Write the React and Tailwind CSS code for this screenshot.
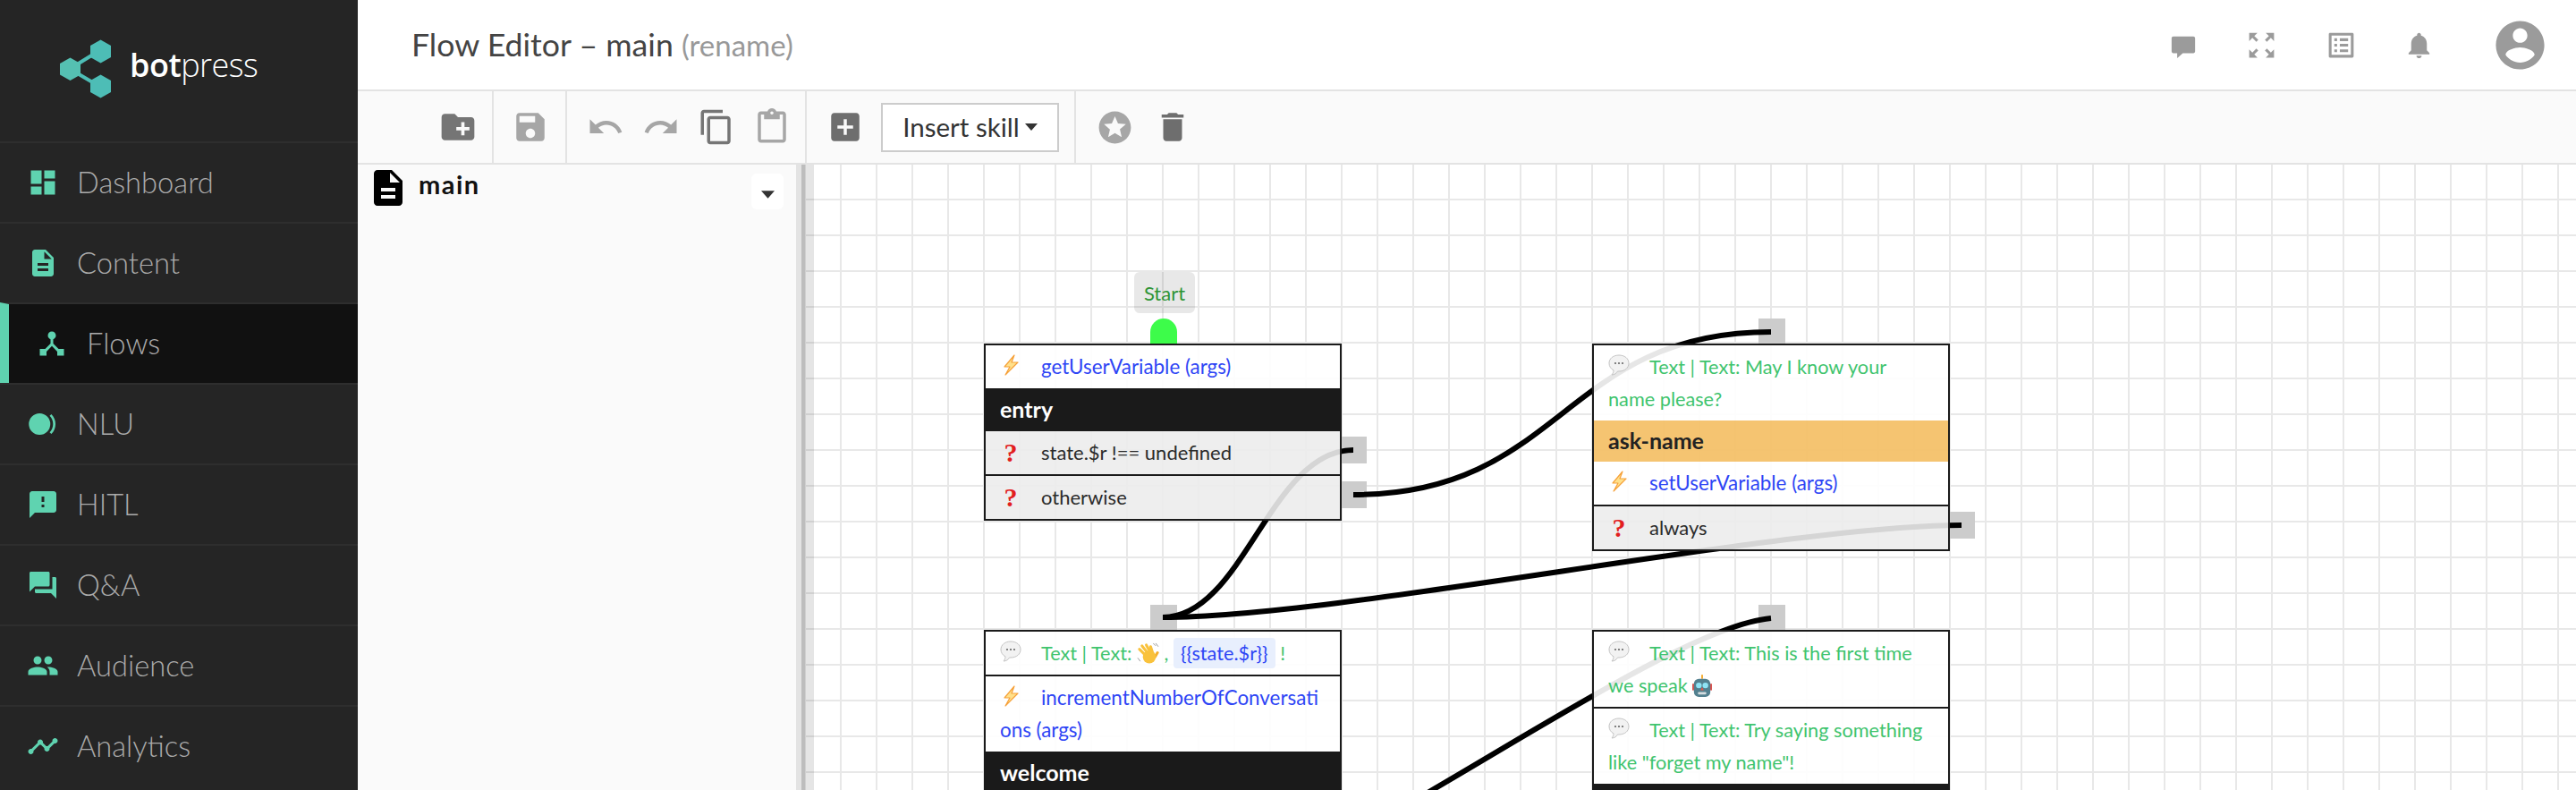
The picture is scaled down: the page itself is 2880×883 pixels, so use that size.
import React from 'react';

const ICONS = {
  dashboard: 'M3 13h8V3H3v10zm0 8h8v-6H3v6zm10 0h8V11h-8v10zm0-18v6h8V3h-8z',
  description: 'M14 2H6c-1.1 0-1.99.9-1.99 2L4 20c0 1.1.89 2 1.99 2H18c1.1 0 2-.9 2-2V8l-6-6zm2 16H8v-2h8v2zm0-4H8v-2h8v2zm-3-5V3.5L18.5 9H13z',
  hub: 'M17 16l-4-4V8.82C14.16 8.4 15 7.3 15 6c0-1.66-1.34-3-3-3S9 4.34 9 6c0 1.3.84 2.4 2 2.82V12l-4 4H3v5h5v-3.05l4-4.2 4 4.2V21h5v-5h-4z',
  failed: 'M20 2H4c-1.1 0-1.99.9-1.99 2L2 22l4-4h14c1.1 0 2-.9 2-2V4c0-1.1-.9-2-2-2zm-7 12h-2v-2h2v2zm0-4h-2V6h2v4z',
  forum: 'M21 6h-2v9H6v2c0 .55.45 1 1 1h11l4 4V7c0-.55-.45-1-1-1zm-4 6V3c0-.55-.45-1-1-1H3c-.55 0-1 .45-1 1v14l4-4h10c.55 0 1-.45 1-1z',
  people: 'M16 11c1.66 0 2.99-1.34 2.99-3S17.66 5 16 5c-1.66 0-3 1.34-3 3s1.34 3 3 3zm-8 0c1.66 0 2.99-1.34 2.99-3S9.66 5 8 5C6.34 5 5 6.34 5 8s1.34 3 3 3zm0 2c-2.33 0-7 1.17-7 3.5V19h14v-2.5c0-2.33-4.67-3.5-7-3.5zm8 0c-.29 0-.62.02-.97.05 1.16.84 1.97 1.97 1.97 3.45V19h6v-2.5c0-2.33-4.67-3.5-7-3.5z',
  timeline: 'M23 8c0 1.1-.9 2-2 2-.18 0-.35-.02-.51-.07l-3.56 3.55c.05.16.07.34.07.52 0 1.1-.9 2-2 2s-2-.9-2-2c0-.18.02-.36.07-.52l-2.55-2.55c-.16.05-.34.07-.52.07s-.36-.02-.52-.07l-4.55 4.56c.05.16.07.33.07.51 0 1.1-.9 2-2 2s-2-.9-2-2 .9-2 2-2c.18 0 .35.02.51.07l4.56-4.55C8.02 9.36 8 9.18 8 9c0-1.1.9-2 2-2s2 .9 2 2c0 .18-.02.36-.07.52l2.55 2.55c.16-.05.34-.07.52-.07s.36.02.52.07l3.55-3.56C19.02 8.35 19 8.18 19 8c0-1.1.9-2 2-2s2 .9 2 2z',
  nlu: 'M9.5 4a8 8 0 1 0 0 16 8 8 0 0 0 0-16zM18.3 4.6l-1.3 1.2c3.4 3.4 3.4 9 0 12.4l1.3 1.2c4.1-4.1 4.1-10.7 0-14.8z',
  newFolder: 'M20 6h-8l-2-2H4c-1.11 0-1.99.89-1.99 2L2 18c0 1.11.89 2 2 2h16c1.11 0 2-.89 2-2V8c0-1.11-.89-2-2-2zm-1 8h-3v3h-2v-3h-3v-2h3V9h2v3h3v2z',
  save: 'M17 3H5c-1.11 0-2 .9-2 2v14c0 1.1.89 2 2 2h14c1.1 0 2-.9 2-2V7l-4-4zm-5 16c-1.66 0-3-1.34-3-3s1.34-3 3-3 3 1.34 3 3-1.34 3-3 3zm3-10H5V5h10v4z',
  undo: 'M12.5 8c-2.65 0-5.05.99-6.9 2.6L2 7v9h9l-3.62-3.62c1.39-1.16 3.16-1.88 5.12-1.88 3.54 0 6.55 2.31 7.6 5.5l2.37-.78C21.08 11.03 17.15 8 12.5 8z',
  redo: 'M18.4 10.6C16.55 8.99 14.15 8 11.5 8c-4.65 0-8.58 3.03-9.96 7.22L3.9 16c1.05-3.19 4.05-5.5 7.6-5.5 1.95 0 3.73.72 5.12 1.88L13 16h9V7l-3.6 3.6z',
  copy: 'M16 1H4c-1.1 0-2 .9-2 2v14h2V3h12V1zm3 4H8c-1.1 0-2 .9-2 2v14c0 1.1.9 2 2 2h11c1.1 0 2-.9 2-2V7c0-1.1-.9-2-2-2zm0 16H8V7h11v14z',
  paste: 'M19 2h-4.18C14.4.84 13.3 0 12 0c-1.3 0-2.4.84-2.82 2H5c-1.1 0-2 .9-2 2v16c0 1.1.9 2 2 2h14c1.1 0 2-.9 2-2V4c0-1.1-.9-2-2-2zm-7 0c.55 0 1 .45 1 1s-.45 1-1 1-1-.45-1-1 .45-1 1-1zm7 18H5V4h2v3h10V4h2v16z',
  addBox: 'M19 3H5c-1.11 0-2 .9-2 2v14c0 1.1.89 2 2 2h14c1.1 0 2-.9 2-2V5c0-1.1-.9-2-2-2zm-2 10h-4v4h-2v-4H7v-2h4V7h2v4h4v2z',
  stars: 'M11.99 2C6.47 2 2 6.48 2 12s4.47 10 9.99 10C17.52 22 22 17.52 22 12S17.52 2 11.99 2zm4.24 16L12 15.45 7.77 18l1.12-4.81-3.73-3.23 4.92-.42L12 5l1.92 4.53 4.92.42-3.73 3.23L16.23 18z',
  trash: 'M6 19c0 1.1.9 2 2 2h8c1.1 0 2-.9 2-2V7H6v12zM19 4h-3.5l-1-1h-5l-1 1H5v2h14V4z',
  chat: 'M21 4.5H3c-.8 0-1.5.7-1.5 1.5v12c0 .8.7 1.5 1.5 1.5h3.5V24l5-4.5H21c.8 0 1.5-.7 1.5-1.5V6c0-.8-.7-1.5-1.5-1.5z',
  expand: 'M15 3l2.3 2.3-2.89 2.87 1.42 1.42L18.7 6.7 21 9V3zM3 9l2.3-2.3 2.87 2.89 1.42-1.42L6.7 5.3 9 3H3zm6 12l-2.3-2.3 2.89-2.87-1.42-1.42L5.3 17.3 3 15v6zm12-6l-2.3 2.3-2.87-2.89-1.42 1.42 2.89 2.87L15 21h6z',
  list: 'M19 5v14H5V5h14m1.1-2H3.9c-.5 0-.9.4-.9.9v16.2c0 .4.4.9.9.9h16.2c.4 0 .9-.5.9-.9V3.9c0-.5-.5-.9-.9-.9zM11 7h6v2h-6V7zm0 4h6v2h-6v-2zm0 4h6v2h-6zM7 7h2v2H7zm0 4h2v2H7zm0 4h2v2H7z',
  bell: 'M12 22c1.1 0 2-.9 2-2h-4c0 1.1.89 2 2 2zm6-6v-5c0-3.07-1.64-5.64-4.5-6.32V4c0-.83-.67-1.5-1.5-1.5s-1.5.67-1.5 1.5v.68C7.63 5.36 6 7.92 6 11v5l-2 2v1h16v-1l-2-2z',
  account: 'M12 2C6.48 2 2 6.48 2 12s4.48 10 10 10 10-4.48 10-10S17.52 2 12 2zm0 3c1.66 0 3 1.34 3 3s-1.34 3-3 3-3-1.34-3-3 1.34-3 3-3zm0 14.2c-2.5 0-4.71-1.28-6-3.22.03-1.99 4-3.08 6-3.08 1.99 0 5.97 1.09 6 3.08-1.29 1.94-3.5 3.22-6 3.22z',
};

function Icon({ name, className = '' }) {
  return (
    <svg viewBox="0 0 24 24" className={'fill-current shrink-0 ' + className}>
      <path d={ICONS[name]} />
    </svg>
  );
}

const NAV = [
  { label: 'Dashboard', icon: 'dashboard' },
  { label: 'Content', icon: 'description' },
  { label: 'Flows', icon: 'hub', active: true },
  { label: 'NLU', icon: 'nlu' },
  { label: 'HITL', icon: 'failed' },
  { label: 'Q&A', icon: 'forum' },
  { label: 'Audience', icon: 'people' },
  { label: 'Analytics', icon: 'timeline' },
];

function Logo() {
  return (
    <div className="h-[158px] flex items-start pt-[44px] pl-[66px]">
      <svg viewBox="0 0 60 66" className="w-[60px] h-[66px] mr-[19px]">
        <path d="M12 33 L46 12 M12 33 L46 53" stroke="#4dbdb6" strokeWidth="4" fill="none" />
        <path d="M12.5 20.5 L24 27 V39.5 L12.5 46 L1 39.5 V27 Z" fill="#55c0b2" />
        <path d="M46.5 0.5 L58 7 V20 L46.5 26.5 L35 20 V7 Z" fill="#4dbdb6" />
        <path d="M46.5 39.500 L58 46 V59 L46.5 65.500 L35 59 V46 Z" fill="#4dbdb6" />
      </svg>
      <div className="text-[36px] leading-[46px] text-white font-['Open_Sans',sans-serif] mt-[6px] tracking-[-0.5px]">
        <span className="font-semibold">bot</span><span className="font-light">press</span>
      </div>
    </div>
  );
}

function Sidebar() {
  return (
    <aside className="w-[400px] shrink-0 h-full bg-[#252525] overflow-hidden">
      <Logo />
      {NAV.map((item) => (
        <div
          key={item.label}
          className={
            item.active
              ? 'h-[90px] border-t-2 border-[#2e2e2e] bg-[#111111] border-l-[10px] border-l-[#5fd3b0] pl-[30px] flex items-center gap-[21px] text-[#ababab]'
              : 'h-[90px] border-t-2 border-[#2e2e2e] pl-[30px] flex items-center gap-[20px] text-[#ababab]'
          }
        >
          <Icon name={item.icon} className="w-[36px] h-[36px] text-[#5fd3b0]" />
          <span className="text-[32.7px] font-light">{item.label}</span>
        </div>
      ))}
    </aside>
  );
}

function Header() {
  return (
    <header className="h-[102px] shrink-0 bg-white border-b-2 border-[#e3e3e3] flex items-center pl-[60px] pr-[30px]">
      <h1 className="text-[35.7px] text-[#444444] font-normal">
        Flow Editor – main <span className="text-[#999999] text-[33px]">(rename)</span>
      </h1>
      <div className="ml-auto flex items-center text-[#9b9b9b]">
        <Icon name="chat" className="w-[30px] h-[30px] mr-[54px]" />
        <Icon name="expand" className="w-[37px] h-[37px] mr-[52px]" />
        <Icon name="list" className="w-[37px] h-[37px] mr-[51px]" />
        <Icon name="bell" className="w-[35px] h-[35px] mr-[63px]" />
        <Icon name="account" className="w-[65px] h-[65px]" />
      </div>
    </header>
  );
}

function Toolbar() {
  return (
    <div className="h-[82px] shrink-0 bg-[#fafafa] border-b-2 border-[#e3e3e3] flex items-center">
      <div className="w-[152px] h-full border-r-2 border-[#e3e3e3] flex items-center justify-end pr-[16px]">
        <Icon name="newFolder" className="w-[44px] h-[44px] text-[#757575]" />
      </div>
      <div className="w-[82px] h-full border-r-2 border-[#e3e3e3] flex items-center justify-center pl-[2px]">
        <Icon name="save" className="w-[42px] h-[42px] text-[#a6a6a6]" />
      </div>
      <div className="w-[268px] h-full border-r-2 border-[#e3e3e3] flex items-center pl-[22px] gap-[20px]">
        <Icon name="undo" className="w-[42px] h-[42px] text-[#a6a6a6]" />
        <Icon name="redo" className="w-[42px] h-[42px] text-[#a6a6a6]" />
        <Icon name="copy" className="w-[42px] h-[42px] text-[#757575]" />
        <Icon name="paste" className="w-[42px] h-[42px] text-[#a6a6a6]" />
      </div>
      <div className="w-[301px] h-full border-r-2 border-[#e3e3e3] flex items-center pl-[22px]">
        <Icon name="addBox" className="w-[42px] h-[42px] text-[#6e6e6e]" />
        <button className="ml-[19px] w-[199px] h-[55px] bg-white border-2 border-[#cccccc] flex items-center justify-center gap-[6px] text-[29.5px] text-[#333333]">
          Insert skill
          <svg viewBox="0 0 14 8" className="w-[14px] h-[8px] fill-[#333333]"><path d="M0 0h14L7 8z" /></svg>
        </button>
      </div>
      <div className="flex items-center pl-[22px] gap-[22px]">
        <Icon name="stars" className="w-[43px] h-[43px] text-[#a6a6a6]" />
        <Icon name="trash" className="w-[42px] h-[42px] text-[#6e6e6e]" />
      </div>
    </div>
  );
}

function FlowPanel() {
  return (
    <div className="w-[490px] shrink-0 h-full bg-[#fafafa] flex items-start">
      <Icon name="description" className="w-[48px] h-[48px] ml-[10px] mt-[2px] text-black" />
      <span className="ml-[10px] mt-[4px] text-[29px] font-bold tracking-[1.5px] text-[#111111] leading-[36px]">main</span>
      <div className="ml-auto mr-[14px] mt-[10px] w-[36px] h-[40px] bg-white rounded-md flex items-center justify-center pt-[6px]">
        <svg viewBox="0 0 14 8" className="w-[15px] h-[9px] fill-[#333333]"><path d="M0 0h14L7 8z" /></svg>
      </div>
    </div>
  );
}

function Splitter() {
  return (
    <div className="w-[10px] shrink-0 h-full bg-[#e3e3e3] flex justify-end">
      <div className="w-[4px] h-full bg-[#bdbdbd]" />
    </div>
  );
}

function Bolt() {
  return (
    <svg viewBox="0 0 24 24" className="w-[24px] h-[24px]">
      <path d="M16 1 L5 14 H11 L6 23 L20 9 H13 Z" fill="#ffe08a" stroke="#f6a13a" strokeWidth="1.200" strokeLinejoin="round" />
    </svg>
  );
}

function Bubble() {
  return (
    <svg viewBox="0 0 24 24" className="w-[24px] h-[24px]">
      <path d="M12 1 C5.500 1 1 4.800 1 10 C1 13.500 3 16.300 6 17.800 C6 20 5 22 4 23 C7 23 9.500 21 10.500 19 C11 19 11.500 19 12 19 C18.500 19 23 15.200 23 10 C23 4.800 18.500 1 12 1 Z" fill="#f2f2f2" stroke="#c4c4c4" strokeWidth="1" />
      <circle cx="8" cy="10" r="1.100" fill="#666666" />
      <circle cx="12" cy="10" r="1.100" fill="#666666" />
      <circle cx="16" cy="10" r="1.100" fill="#666666" />
    </svg>
  );
}

function Wave() {
  return (
    <svg viewBox="0 0 26 26" className="inline-block w-[25px] h-[25px] align-[-5px]">
      <path d="M10 15 L3 8 M13 13 L6 4 M16 12 L11 3 M19 14 L16 5" stroke="#f9c23c" strokeWidth="3.200" strokeLinecap="round" fill="none" />
      <path d="M21 17 L24 12" stroke="#f5b02e" strokeWidth="3.200" strokeLinecap="round" fill="none" />
      <circle cx="14.500" cy="17" r="7.500" fill="#f9c23c" />
      <path d="M19 1 L22 4 M22 1 L25 5 M1 18 L4 22" stroke="#9a9a9a" strokeWidth="1" fill="none" />
    </svg>
  );
}

function Robot() {
  return (
    <svg viewBox="0 0 24 28" className="inline-block w-[22px] h-[26px] align-[-6px]">
      <rect x="11" y="0" width="2" height="5" fill="#f5a623" />
      <rect x="0" y="11" width="3" height="8" fill="#d9534f" />
      <rect x="21" y="11" width="3" height="8" fill="#d9534f" />
      <rect x="2" y="5" width="20" height="22" rx="6" fill="#53808f" />
      <circle cx="8" cy="13" r="3.500" fill="#8fe3f5" />
      <circle cx="16" cy="13" r="3.500" fill="#8fe3f5" />
      <path d="M12 15 L14 19 H10 Z" fill="#e8564a" />
      <rect x="7" y="21" width="10" height="3" rx="1" fill="#d5dde0" />
    </svg>
  );
}

function Row({ kind, breakAll, children }) {
  const tone = {
    action: 'bg-white/90 text-[#2e45f5] text-[22.4px]',
    say: 'bg-white/90 text-[#3fc46e] text-[21.7px]',
    cond: 'bg-[#ececec]/90 text-[#2b2b2b] text-[22px]',
  }[kind];
  return (
    <div className={'px-[16px] py-[6px] leading-[36px] ' + tone + (breakAll ? ' break-all' : '')}>
      <span className="inline-block w-[46px] h-[24px] align-[-2px]">
        {kind === 'action' && <Bolt />}
        {kind === 'say' && <Bubble />}
        {kind === 'cond' && (
          <span className="block w-[24px] text-center text-[30px] leading-[22px] font-bold text-[#e21f1f] font-['Liberation_Serif',serif]">?</span>
        )}
      </span>
      {children}
    </div>
  );
}

function Title({ light, short, children }) {
  return (
    <div
      className={
        (light ? 'bg-[#f4c169]/95 text-[#222222] ' : 'bg-[#1a1a1a] text-white ') +
        (short ? 'h-[46px] ' : 'h-[48px] ') +
        'px-[16px] flex items-center text-[25px] font-bold'
      }
    >
      {children}
    </div>
  );
}

function Node({ className, children }) {
  return <div className={'absolute w-[400px] border-2 border-[#1a1a1a] ' + className}>{children}</div>;
}

function Line() {
  return <div className="h-[2px] bg-[#1a1a1a]" />;
}

// squares behind the wires, canvas coords
const PORTS = [
  'left-[600px] top-[304px] w-[28px] h-[30px]',
  'left-[600px] top-[354px] w-[28px] h-[30px]',
  'left-[1066px] top-[172px] w-[30px] h-[28px]',
  'left-[1280px] top-[388px] w-[28px] h-[30px]',
  'left-[386px] top-[492px] w-[30px] h-[28px]',
  'left-[1066px] top-[492px] w-[30px] h-[28px]',
];

const LINKS = [
  'M1513 503 C1420 503 1390 690 1300 690',
  'M1513 553 C1747 553 1747 371 1980 371',
  'M2193 587 C1993 587 1500 690 1300 690',
  'M1480 950 C1640 870 1880 700 1980 691',
];

function Canvas() {
  return (
    <div className="relative flex-1 h-full overflow-hidden bg-white bg-[linear-gradient(to_right,#e8e8e8_2px,transparent_2px),linear-gradient(to_bottom,#e8e8e8_2px,transparent_2px)] bg-[size:40px_40px] bg-[position:39px_38px]">
      <div className="absolute left-0 top-0 bottom-0 w-[10px] bg-black/10" />
      <div className="absolute left-[368px] top-[120px] w-[68px] h-[46px] rounded-md bg-black/[.09] flex items-center justify-center text-[22px] text-[#2f9436]">
        Start
      </div>
      <div className="absolute left-[386px] top-[172px] w-[30px] h-[28px] rounded-t-[15px] bg-[#3dfc4a]" />
      {PORTS.map((p) => (
        <div key={p} className={'absolute bg-[#cccccc] ' + p} />
      ))}
      <svg viewBox="900 184 1980 699" className="absolute left-0 top-0 w-[1980px] h-[699px]">
        {LINKS.map((d) => (
          <path key={d} d={d} fill="none" stroke="#000000" strokeWidth="6" />
        ))}
      </svg>

      <Node className="left-[200px] top-[200px]">
        <Row kind="action">getUserVariable (args)</Row>
        <Title>entry</Title>
        <Row kind="cond">state.$r !== undefined</Row>
        <Line />
        <Row kind="cond">otherwise</Row>
      </Node>

      <Node className="left-[880px] top-[200px]">
        <Row kind="say">Text | Text: May I know your name please?</Row>
        <Title light short>ask-name</Title>
        <Row kind="action">setUserVariable (args)</Row>
        <Line />
        <Row kind="cond">always</Row>
      </Node>

      <Node className="left-[200px] top-[520px]">
        <Row kind="say">
          Text | Text: <Wave /> ,{' '}
          <span className="inline-block bg-[#e8effd] text-[#2e45f5] rounded-[4px] px-[8px] leading-[34px]">{'{{state.$r}}'}</span> !
        </Row>
        <Line />
        <Row kind="action" breakAll>incrementNumberOfConversations (args)</Row>
        <Title>welcome</Title>
      </Node>

      <Node className="left-[880px] top-[520px]">
        <Row kind="say">Text | Text: This is the first time we speak <Robot /></Row>
        <Line />
        <Row kind="say">Text | Text: Try saying something like "forget my name"!</Row>
        <Title />
      </Node>
    </div>
  );
}

export default function App() {
  return (
    <div className="flex w-[2880px] h-[883px] overflow-hidden font-['Lato',sans-serif]">
      <Sidebar />
      <main className="flex-1 flex flex-col min-w-0">
        <Header />
        <Toolbar />
        <div className="flex flex-1 min-h-0">
          <FlowPanel />
          <Splitter />
          <Canvas />
        </div>
      </main>
    </div>
  );
}
